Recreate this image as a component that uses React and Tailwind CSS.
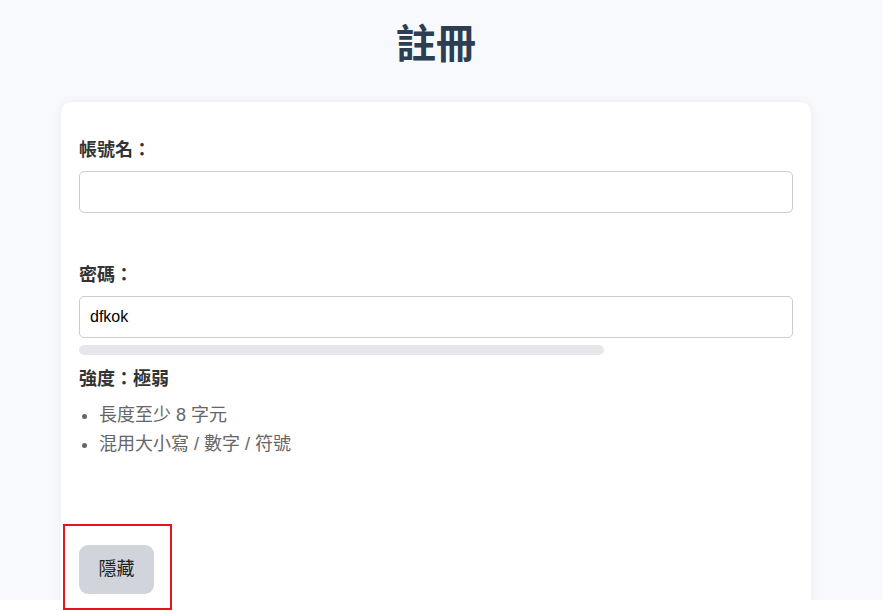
import { useState } from "react";

const font = "font-['Liberation_Sans','Noto_Sans_CJK_TC',sans-serif]";

function Field({ label, value, onChange, className = "" }) {
    return (
        <div className={className}>
            <label className="block text-[18px] leading-[28px] font-bold text-[#333]">{label}</label>
            <input
                type="text"
                value={value}
                onChange={onChange}
                className="mt-[7px] block h-[42px] w-full rounded-[5px] border border-[#ccc] bg-white px-[10px] text-[16px] text-black outline-none"
            />
        </div>
    );
}

export default function App() {
    const [username, setUsername] = useState("");
    const [password, setPassword] = useState("dfkok");

    return (
        <div lang="zh-Hant" className={`relative h-[611px] bg-white ${font}`}>
            <div className="h-[600px] overflow-hidden bg-[#f7f9fc]">
                <div className="ml-[61px] w-[750px]">
                    <h1 className="pt-[17px] text-center text-[40px] leading-[54px] font-bold text-[#2c3e50]">
                        註冊
                    </h1>

                    {/* Carte du formulaire */}
                    <div className="mt-[31px] rounded-[10px] bg-white px-[18px] pt-[34px] pb-[20px] shadow-[0_0_10px_rgba(0,0,0,0.06)]">
                        <Field label="帳號名：" value={username} onChange={(e) => setUsername(e.target.value)} />
                        <Field
                            label="密碼："
                            value={password}
                            onChange={(e) => setPassword(e.target.value)}
                            className="mt-[48px]"
                        />

                        <div className="mt-[7px] h-[10px] w-[525px] rounded-full bg-[#e5e7eb]" />

                        <p className="mt-[10px] text-[18px] leading-[28px] font-bold text-[#333]">強度：極弱</p>

                        <ul className="mt-[8px] list-disc pl-[20px] text-[18px] leading-[29px] text-[#666] marker:text-[#666]">
                            <li>長度至少 8 字元</li>
                            <li>混用大小寫 / 數字 / 符號</li>
                        </ul>

                        <button className="mt-[86px] h-[49px] w-[75px] rounded-[9px] bg-[#d1d5db] text-[18px] text-[#222]">
                            隱藏
                        </button>
                    </div>
                </div>
            </div>

            {/* cadre rouge */}
            <div className="pointer-events-none absolute top-[524px] left-[63px] h-[86px] w-[109px] border-2 border-[#e3161c]" />
        </div>
    );
}
